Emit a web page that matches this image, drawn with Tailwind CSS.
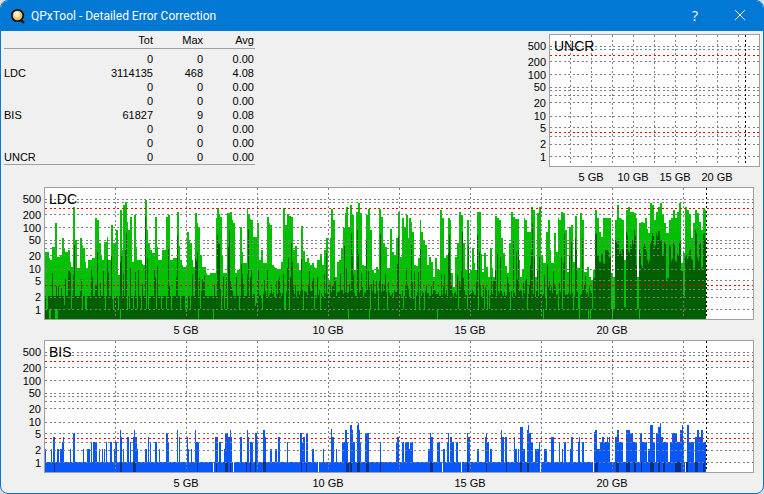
<!DOCTYPE html>
<html lang="en">

<head>
    <meta charset="UTF-8">
    <title>QPxTool - Detailed Error Correction</title>
    <script src="https://cdn.jsdelivr.net/npm/@tailwindcss/browser@4"></script>
</head>

<body class="bg-[#dcdcdc] overflow-hidden font-['Liberation_Sans',sans-serif] text-[11px] text-black">
    <div class="w-[764px] h-[494px] bg-[#f0f0f0] border border-[#0078d4] rounded-lg overflow-hidden flex flex-col">
        <!-- Title bar -->
        <div class="h-[30px] shrink-0 bg-[#0078d4] flex items-center text-white">
            <svg class="ml-[9px] w-[16px] h-[16px]" viewBox="0 0 16 16">
                <path d="M10 11 L14 15" stroke="#111" stroke-width="2.4" />
                <circle cx="7.5" cy="7.5" r="6.6" fill="#111" />
                <circle cx="7.5" cy="7.5" r="4.8" fill="#f4c46a" />
                <circle cx="6.8" cy="6.4" r="2.8" fill="#fdf3d8" />
            </svg>
            <span class="ml-[5px] font-['Roboto',sans-serif] text-[12px]">QPxTool - Detailed Error Correction</span>
            <span class="ml-auto mr-[37px] mb-[1px] font-['Open_Sans',sans-serif] text-[14px]">?</span>
            <svg class="mr-[18px] mb-[2px] w-[10px] h-[10px]" viewBox="0 0 10 10">
                <path d="M0 0 L10 10 M10 0 L0 10" stroke="#fff" stroke-width="1" fill="none" />
            </svg>
        </div>

        <!-- Summary table + UNCR graph -->
        <div class="h-[154px] w-[761px] shrink-0 flex justify-between">
            <div class="w-[251px] ml-[3px]">
                <div class="h-[18px] grid grid-cols-[107px_42px_50px_51px] items-end text-right border-b border-[#a0a0a0] leading-[13px] pb-[1px]">
                    <span></span><span>Tot</span><span>Max</span><span>Avg</span>
                </div>
                <div class="grid grid-cols-[107px_42px_50px_51px] auto-rows-[14px] text-right leading-[14px] pt-[3px] border-b border-[#a0a0a0]">
                    <span></span><span>0</span><span>0</span><span>0.00</span>
                    <span class="text-left">LDC</span><span class="-ml-[20px]">3114135</span><span>468</span><span>4.08</span>
                    <span></span><span>0</span><span>0</span><span>0.00</span>
                    <span></span><span>0</span><span>0</span><span>0.00</span>
                    <span class="text-left">BIS</span><span>61827</span><span>9</span><span>0.08</span>
                    <span></span><span>0</span><span>0</span><span>0.00</span>
                    <span></span><span>0</span><span>0</span><span>0.00</span>
                    <span class="text-left">UNCR</span><span>0</span><span>0</span><span>0.00</span>
                </div>
            </div>
            <svg id="uncr" class="block w-[240px] h-[154px]" viewBox="522 31 240 154">
                <g text-anchor="end" fill="#000">
                    <text x="546" y="50">500</text><text x="546" y="66">200</text><text x="546" y="79">100</text>
                    <text x="546" y="91">50</text><text x="546" y="107">20</text><text x="546" y="120">10</text>
                    <text x="546" y="132">5</text><text x="546" y="148">2</text><text x="546" y="161">1</text>
                </g>
                <g text-anchor="middle" fill="#000">
                    <text x="591" y="181">5 GB</text><text x="633" y="181">10 GB</text>
                    <text x="675" y="181">15 GB</text><text x="717" y="181">20 GB</text>
                </g>
            </svg>
        </div>

        <!-- LDC graph -->
        <svg id="ldc" class="block w-[761px] h-[153px] shrink-0" viewBox="1 185 761 153">
            <g text-anchor="end" fill="#000">
                <text x="41" y="203">500</text><text x="41" y="219">200</text><text x="41" y="232">100</text>
                <text x="41" y="244">50</text><text x="41" y="260">20</text><text x="41" y="273">10</text>
                <text x="41" y="285">5</text><text x="41" y="301">2</text><text x="41" y="314">1</text>
            </g>
            <g text-anchor="middle" fill="#000">
                <text x="186" y="334">5 GB</text><text x="328" y="334">10 GB</text>
                <text x="470" y="334">15 GB</text><text x="612" y="334">20 GB</text>
            </g>
        </svg>

        <!-- BIS graph -->
        <svg id="bis" class="block w-[761px] h-[153px] shrink-0" viewBox="1 338 761 153">
            <g text-anchor="end" fill="#000">
                <text x="41" y="356">500</text><text x="41" y="372">200</text><text x="41" y="385">100</text>
                <text x="41" y="397">50</text><text x="41" y="413">20</text><text x="41" y="426">10</text>
                <text x="41" y="438">5</text><text x="41" y="454">2</text><text x="41" y="467">1</text>
            </g>
            <g text-anchor="middle" fill="#000">
                <text x="186" y="487">5 GB</text><text x="328" y="487">10 GB</text>
                <text x="470" y="487">15 GB</text><text x="612" y="487">20 GB</text>
            </g>
        </svg>
    </div>

    <script>
        const NS = 'http://www.w3.org/2000/svg';
        const LINES = [12, 15, 27, 40, 53, 56, 61, 68, 82, 93, 102, 110, 122];
        const RED = [21, 98];
        const DOTS = '2 2.5';

        function add(svg, tag, attrs, text) {
            const el = document.createElementNS(NS, tag);
            for (const k in attrs) el.setAttribute(k, attrs[k]);
            if (text) el.textContent = text;
            svg.appendChild(el);
            return el;
        }

        function bars(svg, cols, base, fill) {
            let d = '';
            cols.forEach(([x, w, top]) => { d += `M${x} ${top}h${w}V${base}h${-w}z`; });
            add(svg, 'path', { d, fill, 'shape-rendering': 'crispEdges' });
        }

        // frame, grid, marker line and title of one graph
        function frame(svg, o) {
            const { l, t, r, b, vx, end, title } = o;
            const line = (x1, y1, x2, y2, stroke) => add(svg, 'line', {
                x1, y1, x2, y2, stroke, 'stroke-dasharray': DOTS, 'shape-rendering': 'crispEdges'
            });
            LINES.forEach(y => line(l + 1, t + y + .5, r, t + y + .5, '#808080'));
            RED.forEach(y => line(l + 1, t + y + .5, r, t + y + .5, '#f00000'));
            vx.forEach(x => line(x + .5, t + 1, x + .5, b, '#808080'));
            line(end + .5, t + 1, end + .5, b, '#000');
            add(svg, 'rect', { x: l + .5, y: t + .5, width: r - l, height: b - t, fill: 'none', stroke: '#a0a0a0', 'shape-rendering': 'crispEdges' });
            add(svg, 'text', { x: l + 5, y: t + 17, 'font-size': 14, fill: '#000' }, title);
        }

        // LDC envelope, x:top pairs read off the reference
        const ldcTop = [
            45,252,47,252,50,260,52,247,55,223,57,257,60,255,62,238,65,252,68,250,71,267,73,207,75,240,77,268,80,238,83,248,86,268,88,260,
            92,258,95,218,97,220,99,243,102,260,104,242,107,237,108,260,111,225,113,243,116,230,118,275,120,210,122,250,123,205,125,202,
            128,230,130,217,132,262,134,215,137,260,140,260,143,265,145,200,148,243,152,253,155,217,158,260,162,250,166,217,168,215,170,260,
            173,258,177,212,180,260,183,267,187,232,190,243,193,267,195,213,198,227,202,267,204,267,207,275,210,273,213,273,216,218,217,208,
            220,217,223,273,227,213,230,212,233,223,235,273,237,270,240,227,243,263,244,263,247,208,248,215,251,220,253,237,257,223,
            259,260,261,250,263,263,267,217,270,225,272,265,275,268,280,270,281,262,283,208,285,225,287,214,291,217,293,250,295,246,
            299,270,301,226,305,262,307,258,310,265,312,263,315,268,317,260,320,254,322,265,324,250,326,238,328,280,330,238,331,209,333,220,
            335,277,337,262,339,260,341,248,343,228,345,213,346,207,348,227,350,205,352,215,354,270,356,212,358,203,360,213,362,265,364,266,
            366,215,368,209,370,230,372,270,374,273,376,267,378,270,379,209,381,217,383,243,385,247,387,268,390,229,392,252,394,255,396,238,
            398,212,400,257,402,218,404,227,406,215,408,238,409,218,411,222,412,232,414,265,416,266,418,258,
            420,220,421,232,423,240,425,245,427,265,429,257,431,262,433,277,435,258,437,270,440,210,442,218,444,258,446,255,448,218,450,220,
            451,273,453,287,455,257,457,243,459,212,461,215,463,243,465,270,467,220,469,273,470,270,472,248,475,270,477,212,479,212,
            482,272,484,253,486,267,488,277,490,248,493,277,495,216,497,218,499,220,501,238,503,253,505,266,507,273,509,243,511,212,513,217,
            515,219,517,219,520,277,522,270,524,218,525,220,527,232,531,207,533,210,535,277,537,213,539,207,541,255,543,263,546,232,548,220,
            551,263,554,233,556,252,558,218,559,220,561,212,563,213,565,230,567,272,569,227,571,225,573,262,575,216,577,268,580,213,582,220,
            584,272,587,267,589,277,591,280,593,270,595,210,597,218,599,232,601,237,603,218,605,218,607,218,609,218,611,273,613,277,615,220,
            617,205,619,218,622,220,624,260,626,210,628,207,630,212,632,212,634,213,636,218,637,277,639,223,641,222,643,223,645,218,648,233,
            650,203,652,205,654,220,656,212,658,207,660,203,662,215,664,223,666,233,669,220,671,218,673,210,675,218,677,212,679,203,681,263,
            683,253,685,207,687,210,689,215,691,238,693,223,695,210,697,213,699,222,701,230,703,208,705,210,706,0];

        // small seeded generator so the dark layer stays the same on every load
        let seed = 12345;
        const rnd = () => (seed = seed * 16807 % 2147483647) / 2147483647;

        const light = [], dark = [];
        for (let i = 0; i < ldcTop.length - 2; i += 2) {
            const from = ldcTop[i], to = ldcTop[i + 2], peak = ldcTop[i + 1];
            const next = ldcTop[i + 3] || peak;
            // right part of the disc: dark mass follows the envelope, one level per step
            const offset = 16 + rnd() * 30;
            for (let x = from; x < to; x++) {
                // only the first two columns of a step hold the peak, then it drops hard
                const top = x > from + 1 && next > peak ? peak + (next - peak) * .7 : peak;
                let d;
                if (x >= 592) {
                    d = peak > 262 ? top + 8 : top + offset + rnd() * 6;
                    if (peak > 270) d = 309;
                } else if (peak < 240 && rnd() < .45) {
                    d = top + 14 + rnd() * 60;
                } else if (rnd() < .12) {
                    d = 309;
                } else if (rnd() < .25) {
                    d = Math.max(top + 4, 268 + rnd() * 20);
                } else {
                    d = x > 250 ? 290 + rnd() * 7 : 296;
                }
                light.push([x, 1, Math.round(top)]);
                dark.push([x, 1, Math.round(Math.min(d, 309))]);
            }
        }
        const ldcGaps = [49, 50, 55, 56, 57, 198, 213, 120, 348, 369, 437, 543, 579, 588, 590, 612, 639];

        // BIS bars: x, width, top
        const bisBars = [
            [45,1,449],[51,1,449],[53,2,437],[57,2,449],[60,2,449],[62,2,442],[63,1,437],[70,1,449],[73,2,433],[83,1,449],[87,3,449],[91,1,442],[93,4,442],
            [99,1,449],[102,1,449],[104,1,449],[106,1,442],[110,2,442],[114,1,449],[115,2,442],[120,1,430],[121,1,437],[123,1,449],[127,2,437],[130,1,442],[133,1,437],
            [134,1,430],[135,2,437],[137,1,449],[145,2,449],[148,1,437],[150,1,442],[155,2,442],[159,1,449],[166,2,433],[168,1,442],[177,1,430],[179,1,437],
            [187,1,437],[188,1,449],[191,1,449],[195,1,430],[196,3,442],[215,3,437],[219,2,442],[224,1,449],[225,3,433],[228,2,437],[230,1,430],[231,1,437],
            [240,2,437],[247,1,430],[248,1,437],[250,2,442],[255,2,437],[251,1,449],[252,1,442],[255,2,433],[257,1,442],[263,2,430],[264,2,437],[270,2,449],
            [275,2,449],[278,2,437],[279,1,442],[287,1,442],[300,2,433],[302,1,442],[303,2,437],[306,2,433],[312,2,449],[323,1,449],[331,1,429],[332,2,437],
            [336,1,449],[342,3,442],[345,2,430],[347,1,442],[350,2,425],[352,1,430],[353,2,442],[357,1,425],[358,1,423],[359,1,430],[360,1,442],[365,4,433],
            [380,1,442],[396,1,442],[397,2,437],[402,2,442],[405,4,442],[409,4,449],
            [410,3,442],[428,2,449],[430,1,433],[431,2,437],[437,3,442],[443,2,449],[447,2,442],[448,1,433],[450,2,437],[452,2,442],[456,2,442],[467,1,433],[468,2,437],
            [477,2,449],[485,1,437],[486,1,433],[487,2,442],[490,2,449],[501,1,430],[502,2,437],[505,2,437],[514,1,437],[515,2,449],[518,1,449],[520,3,427],[523,2,449],
            [527,1,430],[528,1,425],[529,2,433],[531,2,442],[535,4,449],[539,1,442],[544,3,449],[551,2,437],[552,2,437],[559,1,442],[564,2,442],[565,1,449],[571,2,437],
            [578,2,442],[562,1,449],[570,1,449],[579,1,437],[582,2,442],
            [594,1,432],[595,2,430],[597,3,449],[600,2,442],[602,2,437],[604,6,442],[607,1,437],[609,1,437],[615,2,437],[617,2,430],[619,4,442],[626,4,430],[630,3,433],
            [633,4,442],[640,2,433],[642,5,442],[648,2,449],[650,3,425],[653,2,442],[656,2,433],[658,2,427],[660,1,423],[661,2,437],[663,5,442],[670,2,442],[672,5,433],
            [677,3,442],[680,2,430],[682,1,425],[683,1,442],[687,2,425],[689,5,442],[695,2,437],[697,2,430],[699,2,437],[701,2,430],[702,4,442]];
        const bisDark = [[54,1],[120,2],[133,3],[197,1],[216,1],[225,3],[230,1],[246,1],[250,1],[255,1],[246,1],[263,3],[301,1],[306,1],[346,3],[350,2],[357,3],[366,3],[380,1],
            [430,3],[467,2],[486,1],[506,1],[520,2],[527,2],[595,3],[616,3],[626,4],[634,2],[641,1],[650,4],[658,2],[663,2],[675,6],[686,2],[695,3],[703,2]];
        const bisGaps = [213, 233, 318, 442, 461, 540, 593, 685];

        const common = { t: 187, r: 753, b: 319, vx: [115, 186, 257, 328, 399, 470, 541, 612, 683], end: 706, l: 44 };

        const ldc = document.getElementById('ldc');
        bars(ldc, light, 319, '#00c000');
        bars(ldc, dark, 319, '#006000');
        bars(ldc, ldcGaps.map(x => [x, 1, 309]), 319, '#00c000');
        frame(ldc, { ...common, title: 'LDC' });

        const bis = document.getElementById('bis');
        bars(bis, bisBars, 472, '#0858f8');
        bars(bis, [[45, 661, 462]], 472, '#0858f8');
        bars(bis, bisDark.map(([x, w]) => [x, w, 462]), 472, '#0a2f7f');
        bars(bis, bisGaps.map(x => [x, 1, 462]), 472, '#fff');
        frame(bis, { ...common, t: 340, b: 472, title: 'BIS' });

        frame(document.getElementById('uncr'), {
            l: 549, t: 34, r: 759, b: 166, end: 745,
            vx: [570, 591, 612, 633, 654, 675, 696, 717, 738], title: 'UNCR'
        });

        // white plot backgrounds go under everything else
        [['ldc', 44, 187], ['bis', 44, 340]].forEach(([id, x, y]) => {
            const svg = document.getElementById(id);
            svg.insertBefore(add(svg, 'rect', { x, y, width: 709, height: 132, fill: '#fff' }), svg.firstChild);
        });
        const u = document.getElementById('uncr');
        u.insertBefore(add(u, 'rect', { x: 549, y: 34, width: 210, height: 132, fill: '#fff' }), u.firstChild);
    </script>
</body>

</html>
